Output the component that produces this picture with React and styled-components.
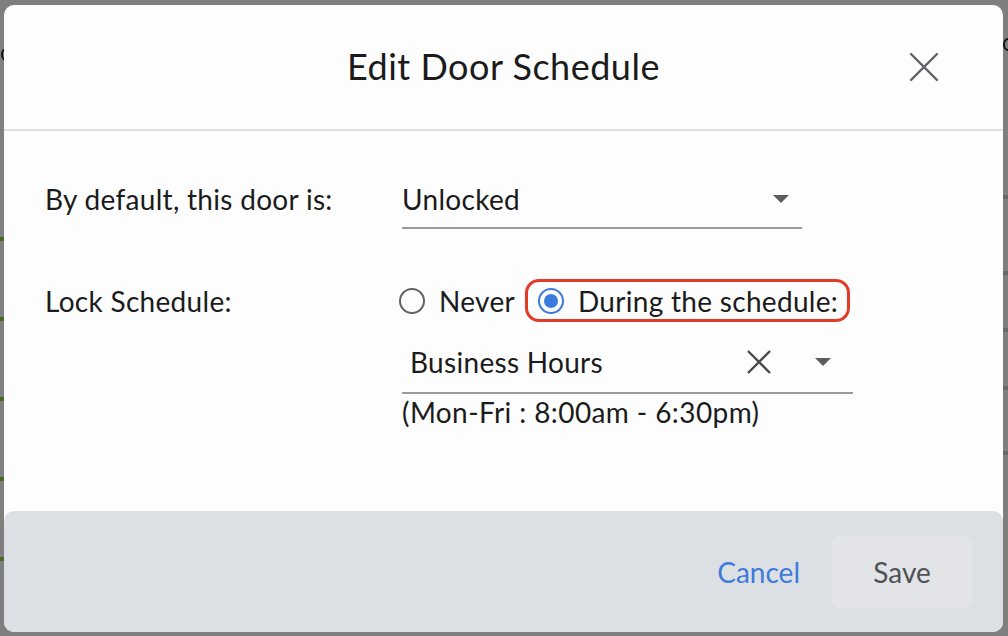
import React from "react";
import styled, { createGlobalStyle } from "styled-components";

const GlobalStyle = createGlobalStyle`
  body {
    margin: 0;
    background: #7f7f7f;
    font-family: "Lato", "Noto Sans", sans-serif;
  }
`;

// bits of the page underneath the overlay that peek out at the edges
const leftMarks = [237, 317, 397, 477, 557];
const rightMarks = [195, 271, 328, 386, 451];

export default function App() {
  return (
    <>
      <GlobalStyle />
      <Screen>
        <Arc $side="left" style={{ top: 48 }} />
        <Arc $side="right" style={{ top: 38 }} />
        {leftMarks.map((y) => (
          <EdgeMark key={"l" + y} $side="left" $color="#4b6a23" style={{ top: y }} />
        ))}
        {rightMarks.map((y) => (
          <EdgeMark key={"r" + y} $side="right" $color="#686868" style={{ top: y }} />
        ))}

        <Dialog>
          <Header>
            <span />
            <Title>Edit Door Schedule</Title>
            <CloseButton aria-label="Close">
              <svg width="30" height="30" viewBox="0 0 30 30">
                <path d="M2 2 L28 28 M28 2 L2 28" stroke="#5f6166" strokeWidth="2.4" strokeLinecap="round" />
              </svg>
            </CloseButton>
          </Header>

          <Body>
            <FieldRow>
              <Label $height={48}>By default, this door is:</Label>
              <Select $width={400} $height={48}>
                <SelectValue>Unlocked</SelectValue>
                <Caret $gap={13} />
              </Select>
            </FieldRow>

            <FieldRow $top={50}>
              <Label $height={43} $flat>Lock Schedule:</Label>
              <Controls>
                <RadioGroup>
                  <RadioOption>
                    <Radio />
                    Never
                  </RadioOption>
                  <Highlight>
                    <RadioOption>
                      <Radio $checked />
                      During the schedule:
                    </RadioOption>
                  </Highlight>
                </RadioGroup>
                <Select $width={443} $height={52} $indent={8}>
                  <SelectValue>Business Hours</SelectValue>
                  <ClearIcon width="26" height="26" viewBox="0 0 26 26">
                    <path d="M2 2 L24 24 M24 2 L2 24" stroke="#4a4a4a" strokeWidth="2.4" />
                  </ClearIcon>
                  <Caret $gap={22} />
                </Select>
                <Hint>(Mon-Fri : 8:00am - 6:30pm)</Hint>
              </Controls>
            </FieldRow>
          </Body>

          <Footer>
            <TextButton>Cancel</TextButton>
            <SaveButton disabled>Save</SaveButton>
          </Footer>
        </Dialog>
      </Screen>
    </>
  );
}

const Screen = styled.div`
  position: relative;
  width: 1008px;
  height: 636px;
  box-sizing: border-box;
  padding: 5px 5px 4px 4px;
  display: flex;
  background: #7f7f7f;
  overflow: hidden;
`;

const Arc = styled.div`
  position: absolute;
  ${(p) => (p.$side === "left" ? "left: 1px;" : "left: 1003px;")}
  width: 10px;
  height: 13px;
  box-sizing: border-box;
  border: 2px solid #111;
  border-radius: 50%;
`;

const EdgeMark = styled.div`
  position: absolute;
  ${(p) => (p.$side === "left" ? "left: 0;" : "right: 0;")}
  width: 5px;
  height: 4px;
  background: ${(p) => p.$color};
`;

const Dialog = styled.div`
  position: relative;
  flex: 1;
  display: flex;
  flex-direction: column;
  background: #fdfdfe;
  border-radius: 10px;
  overflow: hidden;
  color: #1b1b1b;
`;

const Header = styled.div`
  height: 124px;
  flex-shrink: 0;
  display: grid;
  grid-template-columns: 1fr auto 1fr;
  align-items: center;
  border-bottom: 2px solid #dde1e5;
`;

const Title = styled.h1`
  margin: 0 0 2px;
  font-size: 36px;
  font-weight: 400;
  letter-spacing: 0.5px;
`;

const CloseButton = styled.button`
  justify-self: end;
  margin-right: 57px;
  width: 44px;
  height: 44px;
  display: flex;
  align-items: center;
  justify-content: center;
  border: none;
  background: none;
  padding: 0;
`;

const Body = styled.div`
  flex: 1;
  padding: 44px 0 0 41px;
  font-size: 28px;
  letter-spacing: 0.3px;
`;

const FieldRow = styled.div`
  display: flex;
  align-items: flex-start;
  margin-top: ${(p) => p.$top || 0}px;
`;

const Label = styled.div`
  width: 357px;
  flex-shrink: 0;
  height: ${(p) => p.$height}px;
  padding-bottom: ${(p) => (p.$flat ? 0 : 4)}px;
  display: flex;
  align-items: center;
`;

const Controls = styled.div`
  display: flex;
  flex-direction: column;
`;

const Select = styled.div`
  width: ${(p) => p.$width}px;
  height: ${(p) => p.$height}px;
  display: flex;
  align-items: center;
  padding-left: ${(p) => p.$indent || 0}px;
  padding-bottom: 4px;
  border-bottom: 2px solid #9b9b9b;
`;

const SelectValue = styled.span`
  flex: 1;
`;

const Caret = styled.span`
  width: 0;
  height: 0;
  margin-right: ${(p) => p.$gap}px;
  border-left: 8px solid transparent;
  border-right: 8px solid transparent;
  border-top: 8px solid #5c5c5e;
`;

const ClearIcon = styled.svg`
  margin-right: 43px;
`;

const RadioGroup = styled.div`
  height: 43px;
  display: flex;
  align-items: center;
  gap: 10px;
  margin-left: -3px;
  margin-bottom: 14px;
`;

const RadioOption = styled.label`
  display: flex;
  align-items: center;
  gap: 14px;
`;

const Radio = styled.span`
  width: 26px;
  height: 26px;
  box-sizing: border-box;
  border-radius: 50%;
  border: 2px solid ${(p) => (p.$checked ? "#3d7ade" : "#626262")};
  display: flex;
  align-items: center;
  justify-content: center;
  &::after {
    content: "";
    width: 14px;
    height: 14px;
    border-radius: 50%;
    background: ${(p) => (p.$checked ? "#3d7ade" : "transparent")};
  }
`;

const Highlight = styled.div`
  height: 43px;
  box-sizing: border-box;
  display: flex;
  align-items: center;
  padding: 0 9px 0 10px;
  border: 3px solid #e23c28;
  border-radius: 14px;
`;

const Hint = styled.div`
  margin-top: 2px;
  line-height: 1.2;
  letter-spacing: 0.4px;
`;

const Footer = styled.div`
  height: 121px;
  flex-shrink: 0;
  display: flex;
  align-items: center;
  justify-content: flex-end;
  gap: 20px;
  padding-right: 31px;
  background: #dce0e4;
  border-radius: 10px 10px 0 0;
`;

const TextButton = styled.button`
  border: none;
  background: none;
  font-family: inherit;
  font-size: 28px;
  color: #3f7bdb;
  padding: 0 12px;
`;

const SaveButton = styled.button`
  width: 140px;
  height: 72px;
  border: none;
  border-radius: 7px;
  background: #e2e4e8;
  font-family: inherit;
  font-size: 28px;
  color: #505154;
`;
